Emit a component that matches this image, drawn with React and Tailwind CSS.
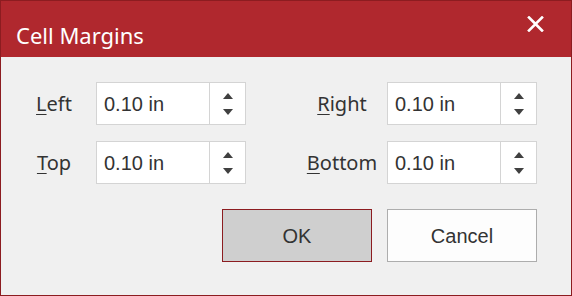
import React from "react";

const Arrow = ({ up }) => (
  <svg width="10" height="6" viewBox="0 0 10 6" className="block">
    <path d={up ? "M0 6 L5 0 L10 6 Z" : "M0 0 L5 6 L10 0 Z"} fill="#404040" />
  </svg>
);

function Spin({ value }) {
  return (
    <div className="flex h-[43px] w-[150px]">
      <div className="flex-1 bg-white border border-[#d4d4d4] flex items-center pl-[7px] text-[20px] text-[#333] font-['Liberation_Sans',Arial,sans-serif]">
        {value}
      </div>
      <div className="w-[36px] bg-white border border-l-0 border-[#d4d4d4] flex flex-col items-center justify-center gap-[10px] pl-[1px]">
        <Arrow up />
        <Arrow />
      </div>
    </div>
  );
}

function Label({ letter, rest }) {
  return (
    <div className="w-[80px] text-center text-[20px] text-[#333] font-['Noto_Sans',sans-serif]">
      <span className="underline underline-offset-[3px] decoration-1">{letter}</span>
      {rest}
    </div>
  );
}

function Row({ a, b }) {
  return (
    <div className="flex items-center h-[43px]">
      <div className="w-[13px]" />
      <Label letter={a[0]} rest={a[1]} />
      <div className="w-[2px]" />
      <Spin value="0.10 in" />
      <div className="w-[56px]" />
      <Label letter={b[0]} rest={b[1]} />
      <div className="w-[5px]" />
      <Spin value="0.10 in" />
    </div>
  );
}

export default function App() {
  return (
    <div className="w-[572px] h-[296px] border border-[#8c1c20] bg-[#f0f0f0] flex flex-col overflow-hidden">
      <div className="h-[56px] bg-[#b0282e] flex items-start justify-between pl-[15px] pr-[27px]">
        <span className="text-white text-[22px] leading-[30px] font-['Noto_Sans',sans-serif] mt-[19px]">Cell Margins</span>
        <svg width="17" height="16" viewBox="0 0 17 16" className="mt-[15px]">
          <path d="M2 1.5 L15 14.5 M15 1.5 L2 14.5" stroke="#fff" strokeWidth="2.6" strokeLinecap="square" />
        </svg>
      </div>
      <div className="flex flex-col pt-[25px]">
        <Row a={["L", "eft"]} b={["R", "ight"]} />
        <div className="h-[16px]" />
        <Row a={["T", "op"]} b={["B", "ottom"]} />
        <div className="flex justify-end gap-[15px] pr-[34px] mt-[25px] font-['Liberation_Sans',Arial,sans-serif] text-[20px] text-[#333]">
          <button className="w-[150px] h-[53px] bg-[#cfcfcf] border border-[#8c1c20]">OK</button>
          <button className="w-[150px] h-[53px] bg-[#fdfdfd] border border-[#adadad]">Cancel</button>
        </div>
      </div>
    </div>
  );
}
